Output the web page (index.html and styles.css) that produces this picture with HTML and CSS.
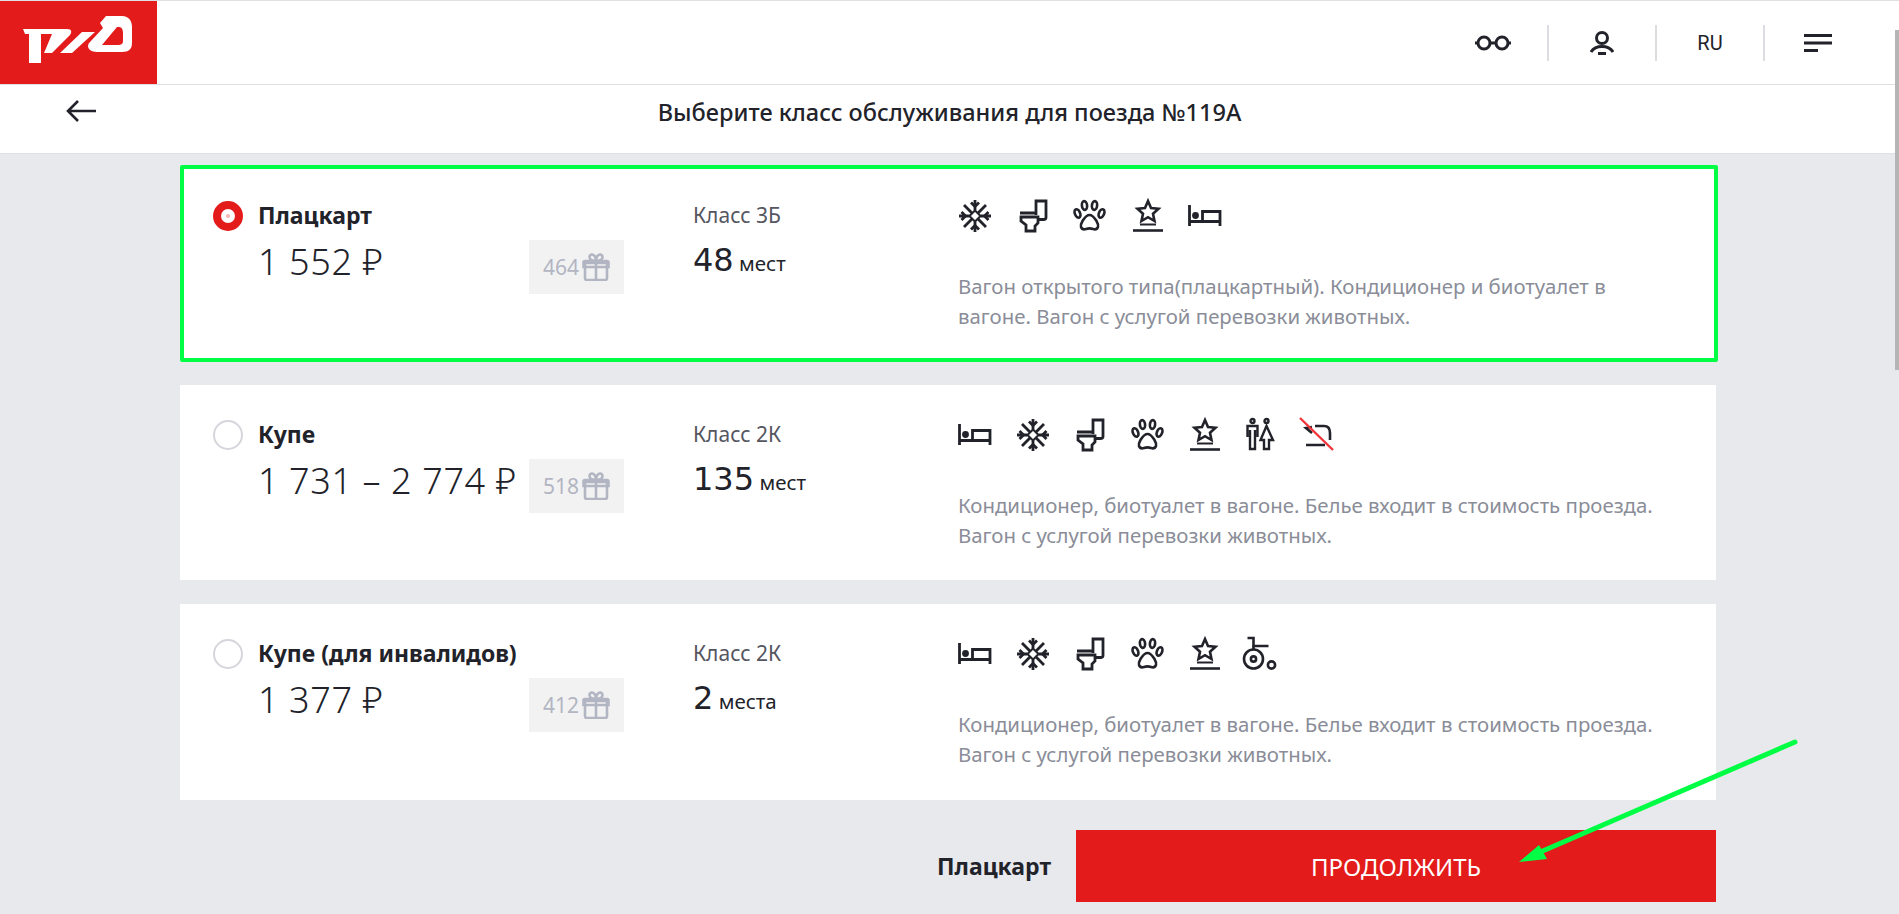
FILE: index.html
```html
<!DOCTYPE html>
<html lang="ru">
<head>
    <meta charset="UTF-8">
    <title>Выбор класса обслуживания</title>
    <link rel="stylesheet" href="styles.css">
</head>
<body>

<svg class="iconDefs" width="0" height="0">
    <defs>
        <g id="iSnow" fill="none" stroke="#22232a" stroke-width="2.8">
            <path d="M17 1V11.500M17 22.500V33M1 17H11.500M22.500 17H33M6 6L14.200 14.200M28 6L19.800 14.200M6 28L14.200 19.800M28 28L19.800 19.800"/>
            <path d="M13 3.5L17 7.5L21 3.5M13 30.5L17 26.5L21 30.5M3.5 13L7.5 17L3.5 21M30.5 13L26.5 17L30.5 21"/>
            <path d="M17 11.5L22.5 17L17 22.5L11.500 17Z" stroke-width="2"/>
        </g>
        <g id="iWc" fill="none" stroke="#22232a" stroke-width="2.8">
            <path d="M16 16V2H26V18.5C26 20 25 20.5 23.5 20.5H19"/>
            <path d="M0 14H16M1 18H18V24L15 27V32H6V26L1 22Z"/>
        </g>
        <g id="iPaw" fill="none" stroke="#22232a" stroke-width="2.6">
            <ellipse cx="11.5" cy="6.5" rx="2.6" ry="4.4" transform="rotate(-6 11.5 6.5)"/>
            <ellipse cx="21.5" cy="6.5" rx="2.6" ry="4.4" transform="rotate(6 21.5 6.5)"/>
            <ellipse cx="4.5" cy="14.5" rx="2.6" ry="4.4" transform="rotate(-24 4.5 14.5)"/>
            <ellipse cx="28.5" cy="14.5" rx="2.6" ry="4.4" transform="rotate(24 28.5 14.5)"/>
            <path d="M16.5 16C13 16 11.5 19 9.5 22C8 24.5 7.5 26 8 28C9 30.5 11.5 30.5 13 30C15 29.3 18 29.3 20 30C21.5 30.5 24 30.5 25 28C25.5 26 25 24.5 23.5 22C21.5 19 20 16 16.5 16Z"/>
        </g>
        <g id="iStar" fill="none" stroke="#22232a">
            <path d="M15 2L18 9L25.5 9.700L20 14.700L21.500 22L15 18.200L8.500 22L10 14.700L4.500 9.700L12 9Z" stroke-width="2.6"/>
            <path d="M7 25.500H23" stroke-width="2"/>
            <path d="M0 31.500H30" stroke-width="2.6"/>
        </g>
        <g id="iBed" fill="none" stroke="#22232a" stroke-width="2.8">
            <path d="M1.5 0V21M1.5 16.5H32M32 21V6.5H14.5V16.5"/>
            <circle cx="7.5" cy="10.5" r="3.4" fill="#22232a" stroke="none"/>
        </g>
        <g id="iWcPair" fill="none" stroke="#22232a" stroke-width="2.4">
            <circle cx="6.5" cy="3" r="2"/>
            <circle cx="20.5" cy="3" r="2"/>
            <path d="M1.5 19V8H11.5V19M4 12V31H9V12"/>
            <path d="M20.5 8L14.5 22H18V31H23V22H27Z"/>
        </g>
        <g id="iNoBed" fill="none">
            <path d="M9 9L3 10L9 15M12 8H21C25 8 27 11 27 15V22M3 27H22" stroke="#22232a" stroke-width="2.6"/>
            <path d="M-3 0L30 32" stroke="#f0353a" stroke-width="2.400"/>
        </g>
        <g id="iChair" fill="none" stroke="#22232a" stroke-width="2.6">
            <path d="M5 1H11V9H26"/>
            <path d="M11 9V13"/>
            <circle cx="11" cy="22" r="9.5"/>
            <circle cx="11" cy="22" r="2.6"/>
            <circle cx="29" cy="28" r="3.6"/>
        </g>
        <g id="iGift" fill="none" stroke="#b2b5c2" stroke-width="2.6">
            <path d="M3 10H25V25C25 26.5 24 27 23 27H5C4 27 3 26.5 3 25Z"/>
            <path d="M1.5 9.5C1.5 8 2 8 3 8H25C26 8 26.5 8 26.5 9.5V14H1.5Z"/>
            <path d="M14 8V27"/>
            <path d="M14 8C11 8 7.5 7 7.5 4C7.5 1.5 10 1 11.5 2C13 3 14 6 14 8C14 6 15 3 16.5 2C18 1 20.500 1.500 20.500 4C20.500 7 17 8 14 8Z"/>
        </g>
    </defs>
</svg>

<header class="topBar">
    <a class="logo" href="#">
        <svg width="157" height="83" viewBox="0 1 157 83" fill="#fff">
            <path d="M23 29H67C72 29 72 32 70 35L52 53H44L52 34H41V63H29V34H25Z"/>
            <path d="M60 53L82 32H95L72 53Z"/>
            <path fill-rule="evenodd" d="M100 23L106 16H122C129 16 132 21 132 27V43C132 49 129 52 122 52H97C90 52 85 47 90 42L103 28ZM102 45L117 27H119C122 27 123 30 123 33V41C123 44 121 45 118 45Z"/>
        </svg>
    </a>
    <nav class="topNav">
        <div class="navItem">
            <svg width="36" height="16" viewBox="0 0 36 16" fill="none" stroke="#22232a" stroke-width="3"><circle cx="9" cy="8" r="6"/><circle cx="27" cy="8" r="6"/><path d="M15 8H21M0 8H3M33 8H36"/></svg>
        </div>
        <div class="navItem">
            <svg width="24" height="24" viewBox="0 0 24 24" fill="none" stroke="#22232a" stroke-width="3"><circle cx="12" cy="7" r="5.500"/><path d="M1 21C3 17.500 7 15.500 12 15.500C17 15.500 21 17.500 23 21"/><path d="M8 22.500H16"/></svg>
        </div>
        <div class="navItem navLang">RU</div>
        <div class="navItem">
            <svg width="28" height="18" viewBox="0 0 28 18" fill="#22232a"><rect width="28" height="3"/><rect y="7.500" width="28" height="3"/><rect y="15" width="14" height="3"/></svg>
        </div>
    </nav>
</header>

<div class="subBar">
    <svg class="backArrow" width="30" height="22" viewBox="0 0 30 22" fill="none" stroke="#22232a" stroke-width="2.6"><path d="M30 11H2M12 1L2 11L12 21"/></svg>
    <h1 class="pageTitle">Выберите класс обслуживания для поезда №119А</h1>
</div>

<main class="cards">
    <section class="card cardActive">
        <span class="radio radioOn"></span>
        <div class="cardName">
            <h3>Плацкарт</h3>
            <div class="priceRow">
                <span class="price">1 552 ₽</span>
                <span class="bonus">464 <svg width="28" height="28" viewBox="0 0 28 28"><use href="#iGift"/></svg></span>
            </div>
        </div>
        <div class="cardClass">
            <div class="classLabel">Класс 3Б</div>
            <div class="seats"><b>48</b> мест</div>
        </div>
        <div class="cardInfo">
            <div class="icons">
                <svg viewBox="0 0 34 34"><use href="#iSnow"/></svg>
                <svg viewBox="-4 0 34 34"><use href="#iWc"/></svg>
                <svg viewBox="0 0 34 34"><use href="#iPaw"/></svg>
                <svg viewBox="-2 0 34 34"><use href="#iStar"/></svg>
                <svg viewBox="0 -6 34 34"><use href="#iBed"/></svg>
            </div>
            <p>Вагон открытого типа(плацкартный). Кондиционер и биотуалет в вагоне. Вагон с услугой перевозки животных.</p>
        </div>
    </section>

    <section class="card">
        <span class="radio"></span>
        <div class="cardName">
            <h3>Купе</h3>
            <div class="priceRow">
                <span class="price">1 731 – 2 774 ₽</span>
                <span class="bonus">518 <svg width="28" height="28" viewBox="0 0 28 28"><use href="#iGift"/></svg></span>
            </div>
        </div>
        <div class="cardClass">
            <div class="classLabel">Класс 2К</div>
            <div class="seats"><b>135</b> мест</div>
        </div>
        <div class="cardInfo">
            <div class="icons">
                <svg viewBox="0 -6 34 34"><use href="#iBed"/></svg>
                <svg viewBox="0 0 34 34"><use href="#iSnow"/></svg>
                <svg viewBox="-4 0 34 34"><use href="#iWc"/></svg>
                <svg viewBox="0 0 34 34"><use href="#iPaw"/></svg>
                <svg viewBox="-2 0 34 34"><use href="#iStar"/></svg>
                <svg viewBox="0 0 34 34"><use href="#iWcPair"/></svg>
                <svg viewBox="0 0 34 34"><use href="#iNoBed"/></svg>
            </div>
            <p>Кондиционер, биотуалет в вагоне. Белье входит в стоимость проезда. Вагон с услугой перевозки животных.</p>
        </div>
    </section>

    <section class="card">
        <span class="radio"></span>
        <div class="cardName">
            <h3>Купе (для инвалидов)</h3>
            <div class="priceRow">
                <span class="price">1 377 ₽</span>
                <span class="bonus">412 <svg width="28" height="28" viewBox="0 0 28 28"><use href="#iGift"/></svg></span>
            </div>
        </div>
        <div class="cardClass">
            <div class="classLabel">Класс 2К</div>
            <div class="seats"><b>2</b> места</div>
        </div>
        <div class="cardInfo">
            <div class="icons">
                <svg viewBox="0 -6 34 34"><use href="#iBed"/></svg>
                <svg viewBox="0 0 34 34"><use href="#iSnow"/></svg>
                <svg viewBox="-4 0 34 34"><use href="#iWc"/></svg>
                <svg viewBox="0 0 34 34"><use href="#iPaw"/></svg>
                <svg viewBox="-2 0 34 34"><use href="#iStar"/></svg>
                <svg viewBox="3.500 0 34 34"><use href="#iChair"/></svg>
            </div>
            <p>Кондиционер, биотуалет в вагоне. Белье входит в стоимость проезда. Вагон с услугой перевозки животных.</p>
        </div>
    </section>

    <div class="footerRow">
        <span class="chosen">Плацкарт</span>
        <button class="nextBtn">ПРОДОЛЖИТЬ</button>
    </div>
</main>

<svg class="noteArrow" width="300" height="140" viewBox="0 0 300 140">
    <path d="M285 7L28 118" stroke="#00ff44" stroke-width="5" stroke-linecap="round" fill="none"/>
    <path d="M9 127L29 110L37 124Z" fill="#00ff44"/>
</svg>

<div class="scrollThumb"></div>

</body>
</html>
```

FILE: styles.css
```css
*{
    box-sizing: border-box;
}
html, body{
    height: 100%;
    overflow: hidden;
}
body{
    margin: 0;
    font-family: "Noto Sans", Roboto, sans-serif;
    background-color: #e8e9ed;
    color: #22232a;
    position: relative;
}
.iconDefs{
    position: absolute;
}
.topBar{
    height: 85px;
    background-color: #fff;
    border-top: 1px solid #dfe0e4;
    border-bottom: 1px solid #dfe0e4;
    display: flex;
    justify-content: space-between;
}
.logo{
    width: 157px;
    height: 83px;
    background-color: #e31b1b;
    display: block;
}
.topNav{
    display: flex;
    align-items: center;
    padding-right: 28px;
    height: 83px;
}
.navItem{
    width: 108px;
    height: 36px;
    display: flex;
    align-items: center;
    justify-content: center;
    border-left: 2px solid #dcdde1;
}
.navItem:first-child{
    border-left: none;
}
.navLang{
    font-family: Roboto, sans-serif;
    font-size: 20px;
}
.subBar{
    height: 69px;
    background-color: #fff;
    border-bottom: 1px solid #dfe0e4;
    display: flex;
    justify-content: center;
    position: relative;
}
.backArrow{
    position: absolute;
    left: 66px;
    top: 15px;
}
.pageTitle{
    margin: 14px 0 0;
    font-size: 23.500px;
    line-height: 26px;
    font-weight: 500;
}
.cards{
    width: 1536px;
    margin: 12px 0 0 180px;
    display: flex;
    flex-direction: column;
    gap: 24px;
}
.card{
    height: 195px;
    background-color: #fff;
    display: grid;
    grid-template-columns: 30px 450px 265px 1fr;
    padding: 35px 0 0 33px;
    position: relative;
}
.card:last-of-type{
    height: 196px;
}
.cardActive::after{
    content: "";
    position: absolute;
    left: 0;
    right: -2px;
    top: -1px;
    bottom: -1px;
    border: 4px solid #00ff44;
    border-radius: 2px;
}
.radio{
    width: 30px;
    height: 30px;
    border-radius: 50%;
    border: 2px solid #d5d6db;
}
.radioOn{
    border: 8px solid #e31b1b;
    background: radial-gradient(circle, #f7b8b8 1.500px, #fff 2.500px);
}
.cardName{
    padding-left: 15px;
}
.cardName h3{
    margin: 1px 0 0;
    font-size: 23px;
    line-height: 26px;
    font-weight: 700;
}
.priceRow{
    position: relative;
    margin-top: 12px;
}
.price{
    font-size: 36px;
    line-height: 44px;
    font-weight: 300;
    letter-spacing: 0.6px;
}
.bonus{
    position: absolute;
    left: 271px;
    top: 0;
    width: 95px;
    height: 54px;
    background-color: #f2f2f3;
    color: #b2b5c2;
    font-size: 21px;
    display: flex;
    align-items: center;
    justify-content: center;
    gap: 3px;
}
.classLabel{
    font-size: 21px;
    line-height: 26px;
    color: #55565f;
    margin-top: 1px;
}
.seats{
    font-size: 20.500px;
    margin-top: 16px;
    line-height: 32px;
}
.seats b{
    font-family: "DejaVu Sans", sans-serif;
    font-size: 32px;
    font-weight: 400;
}
.cardInfo{
    margin-top: -2px;
}
.icons{
    display: flex;
    gap: 23.500px;
}
.icons svg{
    width: 34px;
    height: 34px;
    overflow: visible;
}
.cardInfo p{
    margin: 38px 0 0;
    width: 720px;
    font-size: 20.400px;
    line-height: 30px;
    color: #8a8d98;
}
.footerRow{
    display: flex;
    justify-content: flex-end;
    align-items: center;
    gap: 25px;
    margin-top: 6px;
}
.chosen{
    font-size: 23px;
    font-weight: 700;
}
.nextBtn{
    width: 640px;
    height: 72px;
    border: none;
    background-color: #e31b1b;
    color: #fff;
    font-family: "Noto Sans", sans-serif;
    font-size: 24px;
}
.noteArrow{
    position: absolute;
    left: 1510px;
    top: 735px;
}
.scrollThumb{
    position: absolute;
    right: 0;
    top: 30px;
    width: 4px;
    height: 340px;
    background-color: #b5b5b8;
}
```
